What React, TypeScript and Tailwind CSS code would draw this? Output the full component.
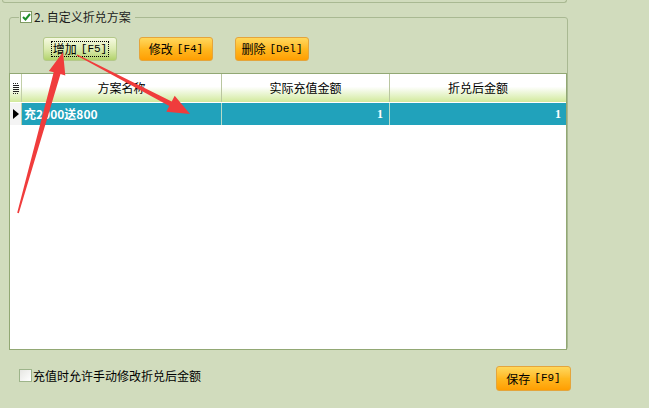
import React from 'react';

const COLUMNS = [
  { key: 'name', label: '方案名称', width: 'w-[200px]' },
  { key: 'paid', label: '实际充值金额', width: 'w-[168px]' },
  { key: 'value', label: '折兑后金额', width: 'w-[176px]' },
];

const ROWS = [{ name: '充2000送800', paid: '1', value: '1' }];

function Btn({ label, hotkey, tone, focused }: { label: string; hotkey: string; tone: 'green' | 'orange'; focused?: boolean }) {
  const skin =
    tone === 'green'
      ? 'bg-linear-to-b from-[#f6f9e2] via-[#dcebb0] to-[#b2d26a] border-[#b4c98a]'
      : 'bg-linear-to-b from-[#ffd85a] via-[#ffb81e] to-[#ff9e00] border-[#e4a53c]';
  return (
    <button className={`w-[74px] h-[24px] rounded-[3px] border flex items-center justify-center text-[12px] text-black ${skin}`}>
      <span className={`flex items-center leading-[12px] px-px py-px ${focused ? 'outline outline-1 outline-dotted outline-black' : ''}`}>
        <span>{label}</span>
        <span className="ml-1 font-['Liberation_Mono',monospace] text-[11px]">[{hotkey}]</span>
      </span>
    </button>
  );
}

function Arrows() {
  return (
    <svg className="absolute inset-0 pointer-events-none" width="649" height="408" viewBox="0 0 649 408">
      <polygon
        fill="#f03c3c"
        points="63,52 65.3,75.5 60.5,74.1 18.8,213.2 17.2,212.8 53.7,72.3 48.9,70.9"
      />
      <polygon
        fill="#f03c3c"
        points="190,114 174.7,95.8 171.7,101.6 77.3,54.4 76.7,55.6 169.3,106 166.3,111.8"
      />
    </svg>
  );
}

export default function App() {
  return (
    <div className="relative w-[649px] h-[408px] overflow-hidden bg-[#d1dcbd] font-['Noto_Sans_CJK_SC',sans-serif] text-[12px] text-black">
      {/* tail of the previous group box */}
      <div className="ml-[2px] w-[565px] h-[3px] border-x border-b border-[#a9b992] rounded-b-[3px]" />

      {/* group 2 */}
      <fieldset className="mt-[7px] ml-[9px] w-[559px] border border-[#a9b992] rounded-[3px]">
        <legend className="ml-[9px] pl-px pr-1">
          <span className="flex items-center h-[14px] leading-[14px]">
            <span className="w-[12px] h-[12px] border border-[#7e9a62] bg-white flex items-center justify-center">
              <svg width="9" height="8" viewBox="0 0 9 8">
                <polyline points="1,4 3.5,6.5 8,1" fill="none" stroke="#1f8f2a" strokeWidth="2" />
              </svg>
            </span>
            <span className="ml-[2px] text-[#1c1c1c]">2. 自定义折兑方案</span>
          </span>
        </legend>

        <div className="flex gap-[22px] pl-[33px] pt-[13px]">
          <Btn label="增加" hotkey="F5" tone="green" focused />
          <Btn label="修改" hotkey="F4" tone="orange" />
          <Btn label="删除" hotkey="Del" tone="orange" />
        </div>

        {/* data grid */}
        <div className="mt-[12px] -ml-px -mb-px w-[558px] h-[277px] border border-[#92a874] bg-white flex flex-col">
          <div className="flex h-[28px] bg-linear-to-b from-white from-45% to-[#d2e99b]">
            <div className="w-[12px] border-r border-[#c2cfa8] flex items-center justify-center">
              <svg width="6" height="11" viewBox="0 0 6 11">
                {[0.5, 2.5, 4.5, 6.5, 8.5, 10.5].map(y => (
                  <line key={y} x1="0" y1={y} x2="6" y2={y} stroke="#222" strokeWidth="1" strokeDasharray={y === 0.5 || y === 10.5 ? '1 1' : undefined} />
                ))}
              </svg>
            </div>
            {COLUMNS.map((c, i) => (
              <div
                key={c.key}
                className={`${c.width} flex items-center justify-center ${i < COLUMNS.length - 1 ? 'border-r border-[#b9c6a0]' : ''}`}
              >
                {c.label}
              </div>
            ))}
          </div>

          {ROWS.map(r => (
            <div key={r.name} className="flex h-[22px] mt-px">
              <div className="w-[12px] border-r border-[#c2cfa8] bg-[#f4f4f4] flex items-center justify-center">
                <svg width="6" height="10" viewBox="0 0 6 10">
                  <polygon points="0,0 6,5 0,10" fill="#000" />
                </svg>
              </div>
              <div className="w-[200px] border-r border-[#b7dbc8] bg-[#21a2bb] text-white font-bold pl-[2px] flex items-center">
                {r.name}
              </div>
              <div className="w-[168px] border-r border-[#b7dbc8] bg-[#21a2bb] text-white font-bold pr-[6px] flex items-center justify-end font-['Liberation_Serif',serif]">
                {r.paid}
              </div>
              <div className="w-[176px] bg-[#21a2bb] text-white font-bold pr-[5px] flex items-center justify-end font-['Liberation_Serif',serif]">
                {r.value}
              </div>
            </div>
          ))}
        </div>
      </fieldset>

      {/* bottom bar */}
      <div className="flex justify-between items-start w-[571px] pl-[19px] pt-[16px]">
        <label className="flex items-center mt-[3px] h-[13px]">
          <span className="w-[13px] h-[13px] border border-[#9db48a] bg-linear-to-br from-[#e6e6e2] to-white" />
          <span className="ml-px leading-[13px]">充值时允许手动修改折兑后金额</span>
        </label>
        <button className="w-[75px] h-[25px] rounded-[3px] border border-[#e4a53c] bg-linear-to-b from-[#ffd85a] via-[#ffb81e] to-[#ff9e00] flex items-center justify-center text-[12px]">
          <span>保存</span>
          <span className="ml-1 font-['Liberation_Mono',monospace] text-[11px]">[F9]</span>
        </button>
      </div>

      <Arrows />
    </div>
  );
}
